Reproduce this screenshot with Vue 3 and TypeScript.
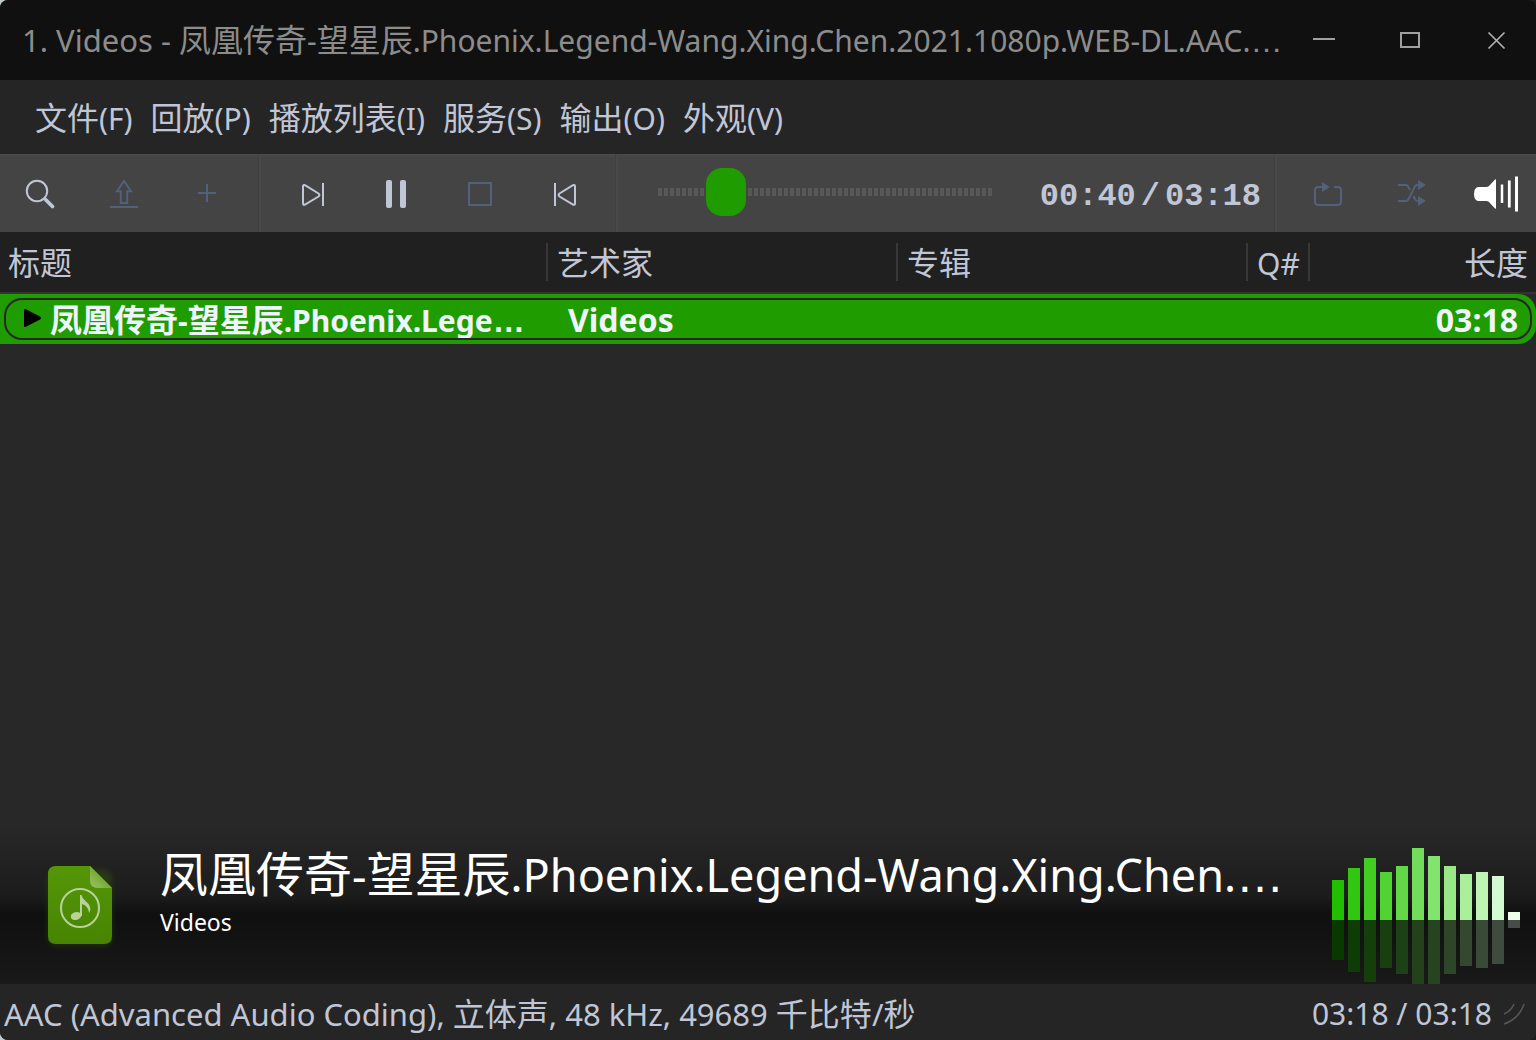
<script setup lang="ts">
import { ref } from 'vue'

interface Run {
  text: string
  kind: 'han' | 'latin' | 'dots'
}

// Latin letters are set a little smaller than the Chinese characters beside them,
// and the ellipsis takes a face with widely spaced dots.
function runs(text: string): Run[] {
  const parts = text.match(/[\u3400-\u9fff]+|…|[^\u3400-\u9fff…]+/g) ?? []
  return parts.map((part) => ({
    text: part,
    kind: part === '…' ? 'dots' : /[\u3400-\u9fff]/.test(part) ? 'han' : 'latin',
  }))
}

const windowTitle = '1. Videos - 凤凰传奇-望星辰.Phoenix.Legend-Wang.Xing.Chen.2021.1080p.WEB-DL.AAC.…'
const menus = ['文件(F)', '回放(P)', '播放列表(I)', '服务(S)', '输出(O)', '外观(V)']
const position = ref(48)

const bars = [
  { height: 40, color: '#22be00' },
  { height: 52, color: '#33c611' },
  { height: 62, color: '#43cd22' },
  { height: 48, color: '#52d334' },
  { height: 54, color: '#62d848' },
  { height: 72, color: '#73dd5b' },
  { height: 64, color: '#83e36f' },
  { height: 54, color: '#98e986' },
  { height: 46, color: '#aaf09c' },
  { height: 48, color: '#bff5b4' },
  { height: 44, color: '#d3fad0' },
  { height: 8, color: '#edffe9' },
]
</script>

<template>
  <div class="window">
    <header class="titlebar">
      <h1 class="title"><span v-for="(r, i) in runs(windowTitle)" :key="i" :class="r.kind">{{ r.text }}</span></h1>
      <div class="window-buttons">
        <button type="button" aria-label="最小化">
          <svg width="24" height="24" viewBox="0 0 24 24"><path d="M1 11h22" stroke="#a0a0a0" stroke-width="2" /></svg>
        </button>
        <button type="button" aria-label="最大化">
          <svg width="24" height="24" viewBox="0 0 24 24"><rect x="3" y="5" width="18" height="14" fill="none" stroke="#a0a0a0" stroke-width="2" /></svg>
        </button>
        <button type="button" aria-label="关闭">
          <svg width="24" height="24" viewBox="0 0 24 24"><path d="M4.500 4.500l16 16M20.500 4.500l-16 16" stroke="#b0b0b0" stroke-width="1.700" /></svg>
        </button>
      </div>
    </header>

    <nav class="menubar">
      <button v-for="m in menus" :key="m" type="button"><span v-for="(r, i) in runs(m)" :key="i" :class="r.kind">{{ r.text }}</span></button>
    </nav>

    <div class="toolbar">
      <div class="group first">
        <button type="button" aria-label="搜索">
          <svg viewBox="0 0 48 48"><circle cx="21" cy="22" r="10.200" /><path d="M28 29l2 2" /><path d="M30 31l6.500 6.500" stroke-width="3.800" stroke-linecap="round" /></svg>
        </button>
        <button type="button" class="dim" aria-label="打开">
          <svg viewBox="0 0 48 48"><path d="M24 12l7 10.200h-3.800V34h-6.400V22.200H17z" /><path d="M10 38h28" /></svg>
        </button>
        <button type="button" class="dim" aria-label="添加">
          <svg viewBox="0 0 48 48"><path d="M14 24h18M23 15v18" /></svg>
        </button>
      </div>
      <div class="group">
        <button type="button" aria-label="下一首">
          <svg viewBox="0 0 48 48"><path d="M14 17.500v17q0 2 2 1l13.500-8q1.800-1.500 0-3L16 16.200q-2-.8-2 1.300zM34 14v23" /></svg>
        </button>
        <button type="button" aria-label="暂停">
          <svg viewBox="0 0 48 48"><path class="solid" d="M15 11h2q2 0 2 2v24q0 2-2 2h-2q-2 0-2-2V13q0-2 2-2zM29 11h2q2 0 2 2v24q0 2-2 2h-2q-2 0-2-2V13q0-2 2-2z" /></svg>
        </button>
        <button type="button" class="dim" aria-label="停止">
          <svg viewBox="0 0 48 48"><rect x="12" y="14" width="22" height="22" /></svg>
        </button>
        <button type="button" aria-label="上一首">
          <svg viewBox="0 0 48 48"><path d="M34 17.500v17q0 2-2 1l-13.500-8q-1.800-1.500 0-3L32 16.200q2-.8 2 1.300zM14 14v23" /></svg>
        </button>
      </div>
      <div class="seek">
        <input v-model.number="position" type="range" min="0" max="292" aria-label="播放位置" />
        <div class="clock"><span>00:40</span><span>/</span><span>03:18</span></div>
      </div>
      <div class="group last">
        <button type="button" class="dim" aria-label="重复">
          <svg viewBox="0 0 48 48"><path d="M19 18h-5q-3 0-3 3v12q0 3 3 3h20q3 0 3-3V21q0-3-3-3h-4" /><path class="solid" d="M18 13l8 5-8 5z" /></svg>
        </button>
        <button type="button" class="dim" aria-label="随机">
          <svg viewBox="0 0 48 48"><path d="M10 16h8q1.500 0 2 1.500L22 21M10 32h8q1.500 0 2.300-1.500L27 17.500q.7-1.500 2-1.500h2M25.300 27l2 3.500q1 1.500 2.500 1.500h1" /><path class="solid" d="M30 11l8 5-8 5zM30 27l8 5-8 5z" /></svg>
        </button>
        <button type="button" class="white" aria-label="音量">
          <svg viewBox="0 0 48 48"><path class="solid" d="M6 18h8q2 0 3-1l6-6.500q1-.7 1 .5v28q0 1.200-1 .5l-6-6.500q-1-1-3-1H6q-4-1-4-7t4-7z" /><path d="M30 15.500v18.500" stroke-width="2.500" /><path d="M37.300 11.500v27" stroke-width="2.800" /><path d="M44.500 7.500v35" stroke-width="3" /></svg>
        </button>
      </div>
    </div>

    <main class="playlist">
      <table>
        <colgroup>
          <col /><col class="c-artist" /><col class="c-album" /><col class="c-queue" /><col class="c-length" />
        </colgroup>
        <thead>
          <tr>
            <th scope="col">标题</th>
            <th scope="col">艺术家</th>
            <th scope="col">专辑</th>
            <th scope="col"><span class="latin">Q#</span></th>
            <th scope="col" class="right">长度</th>
          </tr>
        </thead>
        <tbody>
          <tr>
            <td>
              <div class="track">
                <svg width="19" height="20" viewBox="0 0 19 20"><path d="M1 2.500q0-2.300 2-1.300l14 7.300q2 1.500 0 3L3 18.800q-2 1-2-1.300z" /></svg>
                <span><span v-for="(r, i) in runs('凤凰传奇-望星辰.Phoenix.Lege…')" :key="i" :class="r.kind">{{ r.text }}</span></span>
              </div>
            </td>
            <td>Videos</td>
            <td></td>
            <td></td>
            <td class="right">03:18</td>
          </tr>
        </tbody>
      </table>
    </main>

    <section class="info">
      <svg class="cover" width="80" height="92" viewBox="0 0 80 92">
        <defs>
          <linearGradient id="sheet" x1="0" y1="0" x2="0" y2="1">
            <stop offset="0" stop-color="#559708" /><stop offset="1" stop-color="#478402" />
          </linearGradient>
          <linearGradient id="fold" x1="1" y1="0" x2="0" y2="1">
            <stop offset="0.400" stop-color="#6fa62c" /><stop offset="1" stop-color="#9bc26c" />
          </linearGradient>
          <filter id="glow" x="-20%" y="-20%" width="140%" height="140%"><feGaussianBlur stdDeviation="3" /></filter>
        </defs>
        <rect x="8" y="12" width="64" height="76" rx="8" fill="#478402" opacity="0.250" filter="url(#glow)" />
        <path d="M16 8h34l22 22v48q0 8-8 8H16q-8 0-8-8V16q0-8 8-8z" fill="url(#sheet)" />
        <path d="M50 8l22 22H58q-8 0-8-8z" fill="url(#fold)" />
        <circle cx="40" cy="50" r="19" fill="none" stroke="#b8d29a" stroke-width="2" />
        <ellipse cx="36" cy="58" rx="5.300" ry="4" transform="rotate(-15 36 58)" fill="#b8d29a" />
        <path d="M40 58V37h1.500q.5 3 4 6 6 5 4.500 10l-1 2q-.5-7-7-9v12z" fill="#b8d29a" />
      </svg>
      <div class="now">
        <h2><span v-for="(r, i) in runs('凤凰传奇-望星辰.Phoenix.Legend-Wang.Xing.Chen.…')" :key="i" :class="r.kind">{{ r.text }}</span></h2>
        <p>Videos</p>
      </div>
      <div class="spectrum" aria-hidden="true">
        <div class="levels">
          <i v-for="(b, i) in bars" :key="i" :style="{ height: b.height + 'px', background: b.color }"></i>
        </div>
        <div class="levels mirror">
          <i v-for="(b, i) in bars" :key="i" :style="{ height: b.height + 'px', background: b.color }"></i>
        </div>
      </div>
    </section>

    <footer class="statusbar">
      <span class="format"><span v-for="(r, i) in runs('AAC (Advanced Audio Coding), 立体声, 48 kHz, 49689 千比特/秒')" :key="i" :class="r.kind">{{ r.text }}</span></span>
      <span class="total latin">03:18 / 03:18</span>
      <svg width="24" height="24" viewBox="0 0 24 24"><path d="M2 12Q9 9 12 2M2 22Q17 17 22 2" fill="none" stroke="#555" stroke-width="1.600" /></svg>
    </footer>
  </div>
</template>

<style>
body {
  margin: 0;
  background: linear-gradient(90deg, #c4cccb, #1c1c1c);
}
</style>

<style scoped>
.window {
  display: flex;
  flex-direction: column;
  min-height: 100vh;
  border-radius: 8px;
  overflow: hidden;
  background: #282828;
  color: #c0c6d6;
  font-family: "Noto Sans", "Noto Sans CJK SC", sans-serif;
  font-size: 32px;
  line-height: 40px;
  white-space: nowrap;
}
button {
  padding: 0;
  border: 0;
  background: none;
  color: inherit;
  font: inherit;
}
.latin {
  font-size: 30px;
}
.dots {
  font-family: "Liberation Sans", sans-serif;
}
.titlebar {
  display: flex;
  align-items: center;
  height: 80px;
  background: #101010;
  color: #8c8c8c;
}
.title {
  flex: 1;
  min-width: 0;
  margin: 0;
  padding-left: 22px;
  font-size: 32px;
  font-weight: 400;
}
.title .latin:first-child,
.format .latin {
  font-size: 31px;
}
.window-buttons {
  display: flex;
  gap: 6px;
}
.window-buttons button {
  display: flex;
  align-items: center;
  justify-content: center;
  width: 80px;
  height: 80px;
}
.menubar {
  display: flex;
  box-sizing: border-box;
  align-items: center;
  gap: 18px;
  height: 74px;
  padding: 2px 35px 0;
  background: #252525;
}
.toolbar {
  display: flex;
  height: 78px;
  background: linear-gradient(#494949 2px, #444 2px);
}
.group {
  display: flex;
  align-items: center;
  gap: 8px;
  padding: 0 13px 0 14px;
  border-right: 2px solid #484848;
  box-shadow: inset -1px 0 #404040;
}
.group.first {
  padding-left: 2px;
}
.group.last {
  padding: 0 2px 0 13px;
  border-right: 0;
  border-left: 2px solid #484848;
  box-shadow: -1px 0 #404040;
}
.group button {
  display: flex;
  align-items: center;
  justify-content: center;
  width: 76px;
  height: 74px;
  color: #c0c6d6;
}
.group .dim {
  color: #526079;
}
.group .white {
  color: #fff;
}
.group svg {
  width: 48px;
  height: 48px;
  fill: none;
  stroke: currentColor;
  stroke-width: 2;
}
.group .solid {
  fill: currentColor;
  stroke: none;
}
.seek {
  display: flex;
  flex: 1;
  align-items: center;
  gap: 48px;
  min-width: 0;
  padding: 0 14px 2px 40px;
}
.seek input {
  flex: 1;
  min-width: 0;
  height: 48px;
  margin: 0;
  appearance: none;
  background: repeating-linear-gradient(90deg, #585858 0 4px, transparent 4px 6px) center / 100% 8px no-repeat;
}
.seek input::-webkit-slider-thumb {
  width: 40px;
  height: 48px;
  border-radius: 16px;
  appearance: none;
  background: #1e9c00;
}
.clock {
  display: flex;
  gap: 5px;
  padding-top: 10px;
  font-family: "Liberation Mono", monospace;
  font-weight: 700;
}
.playlist {
  flex: 1;
}
table {
  width: 100%;
  table-layout: fixed;
  border-collapse: separate;
  border-spacing: 0;
}
.c-artist,
.c-album {
  width: 350px;
}
.c-queue {
  width: 62px;
}
.c-length {
  width: 226px;
}
th {
  box-sizing: border-box;
  height: 62px;
  padding: 2px 8px 0;
  border-bottom: 2px solid #333;
  background: linear-gradient(#383838, #383838) right 11px / 2px 38px no-repeat, #202020;
  font-weight: 400;
  text-align: left;
}
th + th {
  padding-left: 9px;
}
th:last-child {
  background: #202020;
}
.right,
th.right {
  text-align: right;
}
tbody tr {
  position: relative;
  color: #f0f4ff;
  font-weight: 700;
}
td:first-child::after {
  content: "";
  position: absolute;
  inset: 4px;
  border: 2px solid #282828;
  border-radius: 18px;
}
td {
  box-sizing: border-box;
  height: 50px;
  padding: 2px 18px 0 20px;
  background: #1e9c00;
}
td:last-child {
  border-radius: 0 18px 18px 0;
}
.track {
  display: flex;
  align-items: center;
  gap: 8px;
  padding-left: 3px;
}
.track svg {
  flex: none;
  padding-bottom: 4px;
}
.info {
  display: flex;
  align-items: flex-start;
  height: 160px;
  padding: 0 16px 0 40px;
  background: linear-gradient(#282828, #1c1c1c 45%, #101010 55%, #101010 60%, #191919);
  color: #fff;
}
.cover {
  flex: none;
  margin: 34px 40px 0 0;
}
.now {
  flex: 1;
  min-width: 0;
  padding-top: 20px;
}
.now h2 {
  margin: 0;
  font-size: 48px;
  font-weight: 400;
  line-height: 60px;
}
.now .latin {
  font-size: 45px;
}
.now p {
  margin: 0;
  font-size: 23px;
  line-height: 32px;
}
.spectrum {
  height: 160px;
  overflow: hidden;
}
.levels {
  display: flex;
  align-items: flex-end;
  gap: 4px;
  height: 96px;
}
.levels i {
  width: 12px;
}
.mirror {
  align-items: flex-start;
  filter: brightness(0.3);
}
.statusbar {
  display: flex;
  box-sizing: border-box;
  align-items: center;
  height: 56px;
  padding: 4px 10px 0 4px;
  background: #252525;
}
.statusbar .total {
  margin: 0 10px 0 auto;
}
</style>
